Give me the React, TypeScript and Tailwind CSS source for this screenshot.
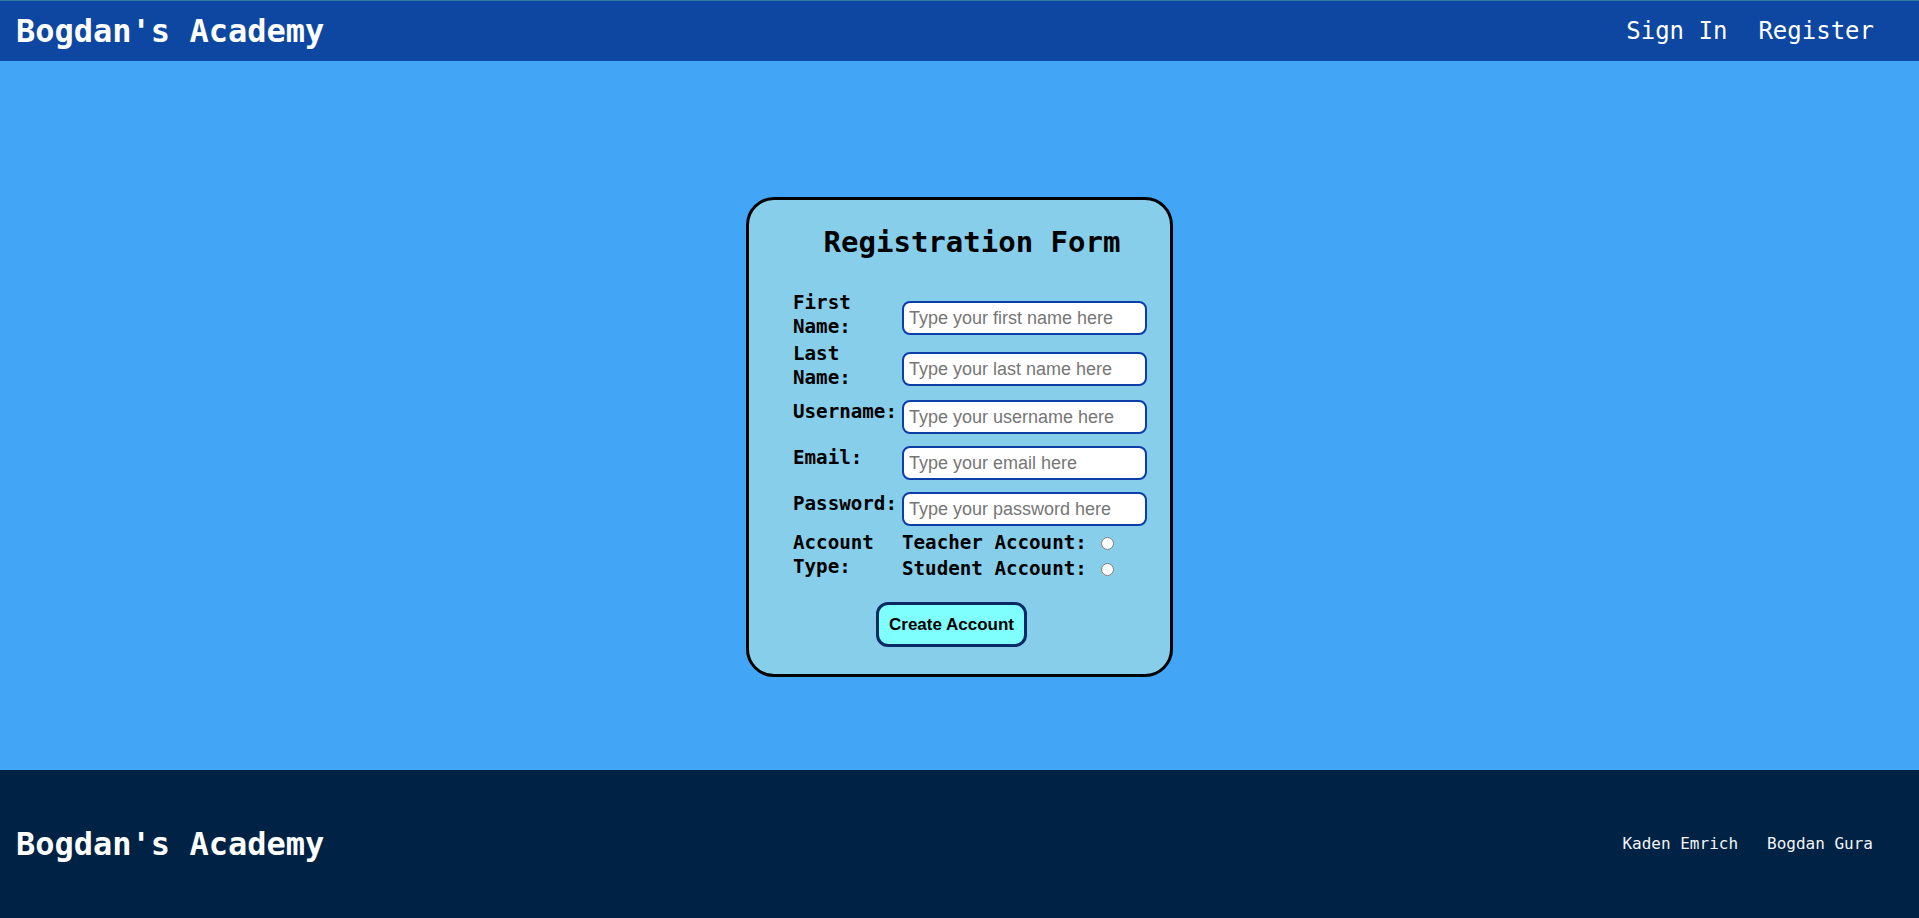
import React from "react";

const mono = "font-['DejaVu_Sans_Mono',monospace]";

function Field({
  label,
  placeholder,
  type = "text",
  rowClass,
  inputClass,
}: {
  label: React.ReactNode;
  placeholder: string;
  type?: string;
  rowClass: string;
  inputClass: string;
}) {
  return (
    <div className={`flex items-start ${rowClass}`}>
      <label className="w-[109px] shrink-0 text-[19.2px] leading-[24px] font-bold text-black">
        {label}
      </label>
      <input
        type={type}
        placeholder={placeholder}
        className={`w-[245px] h-[34px] bg-white border-2 border-[#0d3ea8] rounded-[8px] px-[5px] text-[18px] font-['Liberation_Sans',Arial,sans-serif] text-black placeholder:text-[#767676] outline-none ${inputClass}`}
      />
    </div>
  );
}

export default function App() {
  return (
    <div className={`${mono} w-full min-h-[918px] flex flex-col`}>
      <header className="h-[61px] shrink-0 bg-[#0d47a1] border-t border-[#2d7ca3] flex items-center justify-between pl-[16px] pr-[45px] text-white">
        <h1 className="text-[32px] font-bold">Bogdan's Academy</h1>
        <nav className="flex items-center gap-[31px] text-[24px]">
          <a href="#">Sign In</a>
          <a href="#">Register</a>
        </nav>
      </header>

      <main className="h-[709px] shrink-0 bg-[#42a5f5] flex justify-center items-start pt-[136px]">
        <div className="w-[427px] h-[480px] bg-[#87ceeb] border-[3px] border-black rounded-[28px] pt-[25px]">
          <h2 className="text-[29px] font-bold text-black text-center pl-[25px] leading-[34px]">
            Registration Form
          </h2>
          <form className="pl-[44px] mt-[32px]" onSubmit={(e) => e.preventDefault()}>
            <Field
              label={<>First<br />Name:</>}
              placeholder="Type your first name here"
              rowClass=""
              inputClass="mt-[10px]"
            />
            <Field
              label={<>Last<br />Name:</>}
              placeholder="Type your last name here"
              rowClass="mt-[3px]"
              inputClass="mt-[10px]"
            />
            <Field
              label="Username:"
              placeholder="Type your username here"
              rowClass="mt-[10px]"
              inputClass=""
            />
            <Field
              label="Email:"
              placeholder="Type your email here"
              type="email"
              rowClass="mt-[12px]"
              inputClass=""
            />
            <Field
              label="Password:"
              placeholder="Type your password here"
              type="password"
              rowClass="mt-[12px]"
              inputClass=""
            />
            <div className="flex items-start mt-[5px] text-[19.2px] leading-[24px] font-bold text-black">
              <div className="w-[109px] shrink-0">
                Account
                <br />
                Type:
              </div>
              <div className="flex flex-col">
                <label className="flex items-center h-[24px] whitespace-pre">
                  <span>Teacher Account:</span>
                  <input type="radio" name="acct" className="ml-[14px] w-[13px] h-[13px] m-0" />
                </label>
                <label className="flex items-center h-[24px] mt-[2px] whitespace-pre">
                  <span>Student Account:</span>
                  <input type="radio" name="acct" className="ml-[14px] w-[13px] h-[13px] m-0" />
                </label>
              </div>
            </div>
            <button
              type="submit"
              className="mt-[21px] ml-[83px] w-[151px] h-[45px] bg-[#80ffff] border-[3px] border-[#0a2a66] rounded-[12px] text-[17px] font-bold text-black font-['Liberation_Sans',Arial,sans-serif]"
            >
              Create Account
            </button>
          </form>
        </div>
      </main>

      <footer className="h-[148px] shrink-0 bg-[#002244] flex items-center justify-between pl-[16px] pr-[46px] text-white">
        <h1 className="text-[32px] font-bold">Bogdan's Academy</h1>
        <div className="flex items-center gap-[29px] text-[16px] text-[#f2f4f8]">
          <span>Kaden Emrich</span>
          <span>Bogdan Gura</span>
        </div>
      </footer>
    </div>
  );
}
